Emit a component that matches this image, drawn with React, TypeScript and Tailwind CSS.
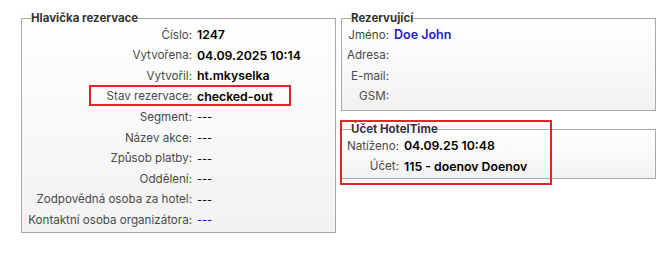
import React from 'react';

type Row = { label: string; value: string; tone?: 'bold' | 'dash' | 'link' | 'name'; boxed?: boolean };

const header: Row[] = [
  { label: 'Číslo:', value: '1247', tone: 'bold' },
  { label: 'Vytvořena:', value: '04.09.2025 10:14', tone: 'bold' },
  { label: 'Vytvořil:', value: 'ht.mkyselka', tone: 'bold' },
  { label: 'Stav rezervace:', value: 'checked-out', tone: 'bold', boxed: true },
  { label: 'Segment:', value: '---', tone: 'dash' },
  { label: 'Název akce:', value: '---', tone: 'dash' },
  { label: 'Způsob platby:', value: '---', tone: 'dash' },
  { label: 'Oddělení:', value: '---', tone: 'dash' },
  { label: 'Zodpovědná osoba za hotel:', value: '---', tone: 'dash' },
  { label: 'Kontaktní osoba organizátora:', value: '---', tone: 'link' },
];

const customer: Row[] = [
  { label: 'Jméno:', value: 'Doe John', tone: 'name' },
  { label: 'Adresa:', value: '' },
  { label: 'E-mail:', value: '' },
  { label: 'GSM:', value: '' },
];

const account: Row[] = [
  { label: 'Natíženo:', value: '04.09.25 10:48', tone: 'bold' },
  { label: 'Účet:', value: '115 - doenov Doenov', tone: 'bold' },
];

const valueClass = {
  bold: 'text-[12.3px] font-semibold text-black',
  dash: 'text-[11px] text-black',
  link: 'text-[11px] text-[#0000cc]',
  name: 'text-[12.5px] font-semibold text-[#1c1cc8]',
};

function InfoRows({ rows, labelWidth }: { rows: Row[]; labelWidth: string }) {
  return (
    <div className="flex flex-col">
      {rows.map((r) => (
        <div key={r.label} className="relative flex h-[20.6px] items-center">
          {r.boxed && (
            <div className="pointer-events-none absolute left-[67px] top-[-2px] h-[21px] w-[202px] border-2 border-[#e3222a]" />
          )}
          <div className={`${labelWidth} shrink-0 text-right text-[11.6px] text-[#4a4a4a]`}>{r.label}</div>
          <div className={`pl-[5px] ${r.tone ? valueClass[r.tone] : ''}`}>{r.value}</div>
        </div>
      ))}
    </div>
  );
}

function Box({ title, children, className }: { title: string; children: React.ReactNode; className?: string }) {
  return (
    <fieldset className={`border border-[#a8a8a8] bg-gradient-to-b from-white to-[#f2f2f2] ${className ?? ''}`}>
      <legend className="ml-[9px] text-[11.5px] font-bold leading-[14px] text-[#333]">{title}</legend>
      {children}
    </fieldset>
  );
}

export default function App() {
  return (
    <div
      className="flex h-[253px] w-[657px] gap-[5px] bg-white pl-[21px] pt-[11px]"
      style={{ fontFamily: 'Inter, "Noto Sans", sans-serif' }}
    >
      <Box title="Hlavička rezervace" className="h-[222px] w-[315px] pb-[2px]">
        <InfoRows rows={header} labelWidth="w-[170px]" />
      </Box>
      <div className="flex w-[315px] flex-col gap-[10px]">
        <Box title="Rezervující" className="h-[100px]">
          <InfoRows rows={customer} labelWidth="w-[47px]" />
        </Box>
        <div className="relative">
          <div className="pointer-events-none absolute left-[-1px] top-[-1px] z-10 h-[65px] w-[212px] border-2 border-[#e3222a]" />
          <div className="pt-[1px]">
            <Box title="Účet HotelTime" className="h-[57px]">
              <InfoRows rows={account} labelWidth="w-[57px]" />
            </Box>
          </div>
        </div>
      </div>
    </div>
  );
}
